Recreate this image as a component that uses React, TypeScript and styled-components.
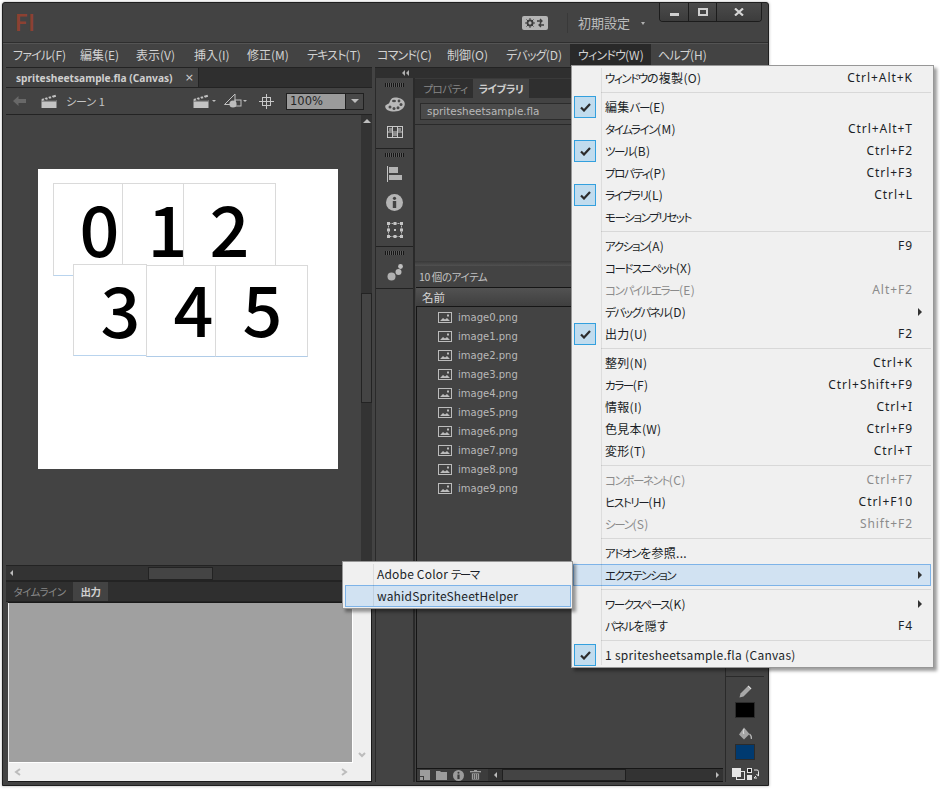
import React from "react";
import styled, { createGlobalStyle } from "styled-components";

const UI = `"Noto Sans CJK JP", "Noto Sans", sans-serif`;
const LATIN = `"DejaVu Sans", "Noto Sans", sans-serif`;

const Global = createGlobalStyle`
  html, body { margin: 0; padding: 0; background: #fff; }
  * { box-sizing: border-box; }
  body { font-family: ${UI}; font-feature-settings: "palt"; }
`;

const Page = styled.div`
  position: relative;
  width: 940px;
  height: 791px;
  padding: 2px 0 0 2px;
  overflow: hidden;
  background: #fff;
`;
const Win = styled.div`
  width: 767px;
  height: 784px;
  display: flex;
  flex-direction: column;
  background: #434343;
  border: 1px solid #1f1f1f;
  border-radius: 3px 3px 0 0;
  box-shadow: 0 0 3px rgba(0, 0, 0, 0.35);
`;

/* Title bar */
const TitleBar = styled.div`
  height: 40px;
  flex: none;
  display: flex;
  align-items: center;
  padding-left: 12px;
  border-bottom: 1px solid #2e2e2e;
`;
const Logo = styled.span`
  font: 700 22px "Lato", sans-serif;
  letter-spacing: 1.5px;
  color: #8c4131;
  margin-right: auto;
`;
const Badge = styled.span`
  width: 26px;
  height: 14px;
  border-radius: 2px;
  background: #b4b4b4;
  display: flex;
  align-items: center;
  justify-content: center;
`;
const TitleSep = styled.span`
  width: 1px;
  height: 20px;
  background: #393939;
  margin: 0 10px 0 19px;
`;
const Workspace = styled.span`
  font-size: 13px;
  color: #bdbdbd;
  width: 63px;
  white-space: nowrap;
`;
const Caret = styled.span`
  width: 0;
  height: 0;
  border-left: 2.5px solid transparent;
  border-right: 2.5px solid transparent;
  border-top: 3px solid #b0b0b0;
  margin-right: 14px;
  margin-top: 2px;
`;
const Controls = styled.div`
  align-self: flex-start;
  display: flex;
  height: 19px;
  margin-right: 6px;
  border: 1px solid #1c1c1c;
  border-top: none;
  border-radius: 0 0 4px 4px;
  overflow: hidden;
`;
const Ctl = styled.span<{ $w: number }>`
  width: ${(p) => p.$w}px;
  display: flex;
  align-items: center;
  justify-content: center;
  background: linear-gradient(#4b4b4b, #3c3c3c);
  & + & {
    border-left: 1px solid #1c1c1c;
  }
`;

/* Menu bar */
const MenuBar = styled.div`
  height: 24px;
  flex: none;
  display: flex;
  padding-left: 3px;
  border-top: 1px solid #545454;
`;
const MenuItem = styled.span<{ $w: number; $on?: boolean }>`
  width: ${(p) => p.$w}px;
  flex: none;
  padding-left: ${(p) => (p.$on ? 8 : 7)}px;
  font-size: 12px;
  line-height: 21px;
  height: 22px;
  color: #d2d2d2;
  white-space: nowrap;
  background: ${(p) => (p.$on ? "#292929" : "transparent")};
`;
const KanaRun = styled.span<{ $bar?: boolean }>`
  font-size: ${(p) => (p.$bar ? 12 : 11.5)}px;
  letter-spacing: ${(p) => (p.$bar ? -0.8 : -1.4)}px;
`;

/* Workspace */
const Body = styled.div`
  flex: 1;
  min-height: 0;
  display: flex;
  padding: 0 3px 3px;
`;
const LeftCol = styled.div`
  width: 366px;
  flex: none;
  display: flex;
  flex-direction: column;
  margin-right: 3px;
`;
const TabBar = styled.div<{ $h: number }>`
  height: ${(p) => p.$h}px;
  flex: none;
  display: flex;
  background: #2f2f2f;
  border-top: 1px solid #232323;
  border-bottom: 1px solid #232323;
`;
const DocTab = styled.div`
  width: 193px;
  display: flex;
  align-items: center;
  justify-content: space-between;
  padding: 0 4px 0 10px;
  background: #434343;
  border-right: 1px solid #232323;
  font: 700 10.2px "Noto Sans", sans-serif;
  color: #cfcfcf;
  white-space: nowrap;
`;
const Close = styled.span`
  font: 400 11px "DejaVu Sans", sans-serif;
  color: #cfcfcf;
`;
const PanelTab = styled.span<{ $on?: boolean; $w: number }>`
  width: ${(p) => p.$w}px;
  display: flex;
  align-items: center;
  justify-content: center;
  font-size: 10.5px;
  letter-spacing: -0.5px;
  font-weight: ${(p) => (p.$on ? 700 : 400)};
  color: ${(p) => (p.$on ? "#cfcfcf" : "#878787")};
  background: ${(p) => (p.$on ? "#434343" : "transparent")};
  white-space: nowrap;
`;
const EditBar = styled.div`
  height: 27px;
  flex: none;
  display: flex;
  align-items: center;
  padding: 0 8px 0 7px;
  border-bottom: 1px solid #232323;
`;
const SceneLabel = styled.span`
  font-size: 11px;
  color: #c4c4c4;
  margin-left: 9px;
  margin-right: auto;
`;
const ToolGlyph = styled.span<{ $ml?: number }>`
  display: flex;
  margin-left: ${(p) => p.$ml ?? 0}px;
`;
const Combo = styled.div`
  width: 78px;
  height: 17px;
  display: flex;
  margin-left: 12px;
  border: 1px solid #202020;
`;
const ComboField = styled.span`
  flex: 1;
  background: #9b9b9b;
  font: 400 11.5px/15px ${LATIN};
  color: #262626;
  padding-left: 3px;
`;
const ComboButton = styled.span`
  width: 18px;
  display: flex;
  align-items: center;
  justify-content: center;
  background: #484848;
  border-left: 1px solid #202020;
`;
const Tri = styled.span<{ $dir: "up" | "down" | "left" | "right"; $c?: string; $s?: number }>`
  width: 0;
  height: 0;
  flex: none;
  ${(p) => {
    const s = p.$s ?? 4;
    const c = p.$c ?? "#bdbdbd";
    if (p.$dir === "up") return `border-left:${s}px solid transparent;border-right:${s}px solid transparent;border-bottom:${s}px solid ${c};`;
    if (p.$dir === "down") return `border-left:${s}px solid transparent;border-right:${s}px solid transparent;border-top:${s}px solid ${c};`;
    if (p.$dir === "left") return `border-top:${s}px solid transparent;border-bottom:${s}px solid transparent;border-right:${s}px solid ${c};`;
    return `border-top:${s}px solid transparent;border-bottom:${s}px solid transparent;border-left:${s}px solid ${c};`;
  }}
`;
const StageRow = styled.div`
  height: 451px;
  flex: none;
  display: flex;
`;
const Stage = styled.div`
  flex: 1;
  padding: 54px 0 0 32px;
  border-bottom: 1px solid #232323;
`;
const Canvas = styled.div`
  position: relative;
  width: 300px;
  height: 300px;
  background: #fff;
`;
const Sprite = styled.div<{ $x: number; $y: number; $w: number; $h: number; $line?: string }>`
  position: absolute;
  left: ${(p) => p.$x}px;
  top: ${(p) => p.$y}px;
  width: ${(p) => p.$w}px;
  height: ${(p) => p.$h}px;
  display: flex;
  align-items: center;
  justify-content: center;
  background: #fff;
  border: 1px solid #dadada;
  border-bottom-color: ${(p) => p.$line ?? "#dadada"};
`;
const Digit = styled.span<{ $dx: number; $dy: number }>`
  font: 500 70px/1 "Noto Sans CJK JP", sans-serif;
  color: #000;
  transform: translate(${(p) => p.$dx}px, ${(p) => p.$dy}px);
`;
const VScroll = styled.div`
  width: 11px;
  flex: none;
  display: flex;
  flex-direction: column;
  align-items: center;
  padding-top: 4px;
  background: #333;
  border-bottom: 1px solid #232323;
`;
const VThumb = styled.div`
  width: 11px;
  height: 110px;
  margin-top: 170px;
  background: #444;
  border: 1px solid #232323;
`;
const HScroll = styled.div`
  height: 15px;
  flex: none;
  display: flex;
  align-items: center;
  padding-left: 4px;
  background: #333;
  border-bottom: 1px solid #232323;
`;
const HThumb = styled.div`
  width: 65px;
  height: 13px;
  margin-left: 135px;
  background: #444;
  border: 1px solid #232323;
`;
const Output = styled.div`
  flex: 1;
  display: grid;
  grid-template-columns: 1fr 18px;
  grid-template-rows: 1fr 18px;
  margin-left: 2px;
  padding-left: 1px;
  background: #efefef;
  border-top: 1px solid #1a1a1a;
  border-right: 1px solid #1a1a1a;
  border-bottom: 1px solid #1a1a1a;
`;
const OutputPane = styled.div`
  background: #a0a0a0;
  border-right: 1px solid #fff;
  border-bottom: 1px solid #fff;
`;
const ChevCell = styled.div<{ $j: string; $a: string }>`
  display: flex;
  justify-content: ${(p) => p.$j};
  align-items: ${(p) => p.$a};
  padding: 4px 5px;
`;

/* Dock */
const DockArea = styled.div`
  flex: 1;
  display: flex;
  flex-direction: column;
`;
const CollapseStrip = styled.div`
  height: 11px;
  flex: none;
  display: flex;
  align-items: center;
  padding-left: 27px;
  background: #2f2f2f;
  border-top: 1px solid #232323;
  gap: 1px;
`;
const DockRow = styled.div`
  flex: 1;
  min-height: 0;
  display: flex;
`;
const IconCol = styled.div`
  width: 40px;
  flex: none;
  display: flex;
  flex-direction: column;
  padding-top: 2px;
  gap: 1px;
  border-left: 1px solid #2a2a2a;
  border-right: 2px solid #2a2a2a;
`;
const IconGroup = styled.div`
  display: flex;
  flex-direction: column;
  align-items: center;
  padding: 3px 0 2px;
  border-bottom: 1px solid #222;
`;
const Grip = styled.div`
  width: 19px;
  height: 4px;
  margin-bottom: 3px;
  background: repeating-linear-gradient(90deg, #161616 0 1px, #5a5a5a 1px 2px);
`;
const IconCell = styled.div<{ $h?: number }>`
  height: ${(p) => p.$h ?? 28}px;
  display: flex;
  align-items: center;
  justify-content: center;
`;
const Library = styled.div`
  width: 308px;
  flex: none;
  display: flex;
  flex-direction: column;
`;
const LibTabs = styled.div`
  height: 20px;
  flex: none;
  display: flex;
  padding-left: 3px;
  background: #2f2f2f;
  border-top: 1px solid #3a3a3a;
`;
const LibPicker = styled.div`
  height: 27px;
  flex: none;
  padding: 5px 0 0 5px;
  border-bottom: 1px solid #2a2a2a;
`;
const Picker = styled.div`
  height: 17px;
  background: #4a4a4a;
  border: 1px solid #2c2c2c;
  font: 400 10.4px/15px ${LATIN};
  color: #b9b9b9;
  padding-left: 6px;
`;
const Preview = styled.div`
  height: 136px;
  flex: none;
`;
const Sash = styled.div`
  height: 5px;
  flex: none;
  background: linear-gradient(#393939, #515151);
`;
const Count = styled.div`
  height: 21px;
  flex: none;
  display: flex;
  align-items: center;
  padding-left: 4px;
  font-size: 10.5px;
  letter-spacing: -0.4px;
  color: #c2c2c2;
`;
const ListHeader = styled.div`
  height: 20px;
  flex: none;
  display: flex;
  align-items: center;
  padding-left: 6px;
  margin-left: 1px;
  background: linear-gradient(#525252, #3f3f3f);
  border-top: 1px solid #161616;
  border-bottom: 1px solid #161616;
  font-size: 11.5px;
  color: #d6d6d6;
`;
const List = styled.div`
  flex: 1;
  margin-left: 1px;
  padding-top: 1px;
  border-left: 1px solid #161616;
`;
const ListRow = styled.div`
  height: 19px;
  display: flex;
  align-items: center;
  gap: 6px;
  padding-left: 21px;
  font: 400 10px "DejaVu Sans", sans-serif;
  color: #b8b8b8;
`;
const LibFoot = styled.div`
  height: 14px;
  flex: none;
  display: flex;
  align-items: center;
  margin-left: 1px;
  padding-left: 3px;
  gap: 6px;
  background: #3c3c3c;
  border-top: 1px solid #161616;
  border-bottom: 1px solid #161616;
  border-left: 1px solid #161616;
`;
const FootScroll = styled.div`
  flex: 1;
  height: 100%;
  display: flex;
  align-items: center;
  margin-left: 1px;
  padding: 0 4px 0 6px;
  background: #333;
`;
const FootThumb = styled.div`
  width: 124px;
  height: 100%;
  margin: 0 auto 0 5px;
  background: #444;
  border: 1px solid #1f1f1f;
`;
const Tools = styled.div`
  width: 39px;
  flex: none;
  display: flex;
  flex-direction: column;
  align-items: center;
  margin-left: 2px;
  border-left: 1px solid #2a2a2a;
`;
const ToolsSpacer = styled.div`
  flex: 1;
  align-self: stretch;
  border-bottom: 1px solid #2a2a2a;
  margin-bottom: 5px;
`;
const Swatch = styled.div<{ $c: string }>`
  width: 20px;
  height: 16px;
  background: ${(p) => p.$c};
  border: 1px solid #2c2c2c;
  margin-top: 2px;
  margin-bottom: 6px;
`;
const SwapRow = styled.div`
  display: flex;
  gap: 2px;
  margin: 2px 0 2px;
`;

/* Menus */
const Popup = styled.div<{ $x: number; $y: number; $w: number; $gut: number }>`
  position: absolute;
  left: ${(p) => p.$x}px;
  top: ${(p) => p.$y}px;
  width: ${(p) => p.$w}px;
  padding: 1px 0;
  background: #f0f0f0;
  border: 1px solid #979797;
  box-shadow: 3px 3px 3px rgba(0, 0, 0, 0.38);
  &::before {
    content: "";
    position: absolute;
    left: ${(p) => p.$gut}px;
    top: 2px;
    bottom: 2px;
    width: 1px;
    background: rgba(0, 0, 0, 0.08);
    z-index: 1;
  }
`;
const Row = styled.div<{ $hot?: boolean; $off?: boolean }>`
  height: 22px;
  display: flex;
  align-items: center;
  margin: 0 2px 0 1px;
  border: 1px solid ${(p) => (p.$hot ? "#7db3e8" : "transparent")};
  background: ${(p) => (p.$hot ? "#d1e2f2" : "transparent")};
  font-size: 12px;
  letter-spacing: 0.3px;
  color: ${(p) => (p.$off ? "#8b8b8b" : "#1b1f27")};
  white-space: nowrap;
`;
const Gutter = styled.span`
  width: 22px;
  flex: none;
  display: flex;
  justify-content: center;
`;
const Check = styled.span`
  width: 22px;
  height: 22px;
  flex: none;
  display: flex;
  align-items: center;
  justify-content: center;
  background: #c1dcee;
  border: 1px solid #33a0de;
`;
const RowLabel = styled.span`
  margin-left: 9px;
  margin-bottom: 2px;
`;
const Shortcut = styled.span`
  margin-left: auto;
  margin-right: 17px;
  margin-bottom: 2px;
  font-family: "Noto Sans", sans-serif;
  letter-spacing: 0.95px;
`;
const RowArrow = styled.span`
  margin-left: auto;
  margin-right: 8px;
  display: flex;
`;
const Sep = styled.div`
  height: 7px;
  display: flex;
  align-items: center;
  margin: 0 2px 0 29px;
  &::after {
    content: "";
    flex: 1;
    height: 1px;
    background: #d8d8d8;
  }
`;
const SubRow = styled(Row)`
  margin: 0 1px 0 2px;
  letter-spacing: 0.18px;
`;
const SubLabel = styled.span`
  margin-left: 31px;
  margin-bottom: 2px;
`;

/* Icons */
const C = "#b8b8b8";
const Palette = () => (
  <svg width="20" height="15" viewBox="0 0 20 15">
    <path d="M10 0.5C15.5 0.5 19.8 3 19.8 7c0 4-4.5 7.5-10.5 7.5C4 14.5.2 12.5.2 9.5c0-2 2.3-2 3.6-3C5 5.5 5 .5 10 .5z" fill={C} />
    <g fill="#4a4a4a">
      <circle cx="5" cy="10" r="1.5" />
      <circle cx="9" cy="11.6" r="1.5" />
      <circle cx="13" cy="10.8" r="1.5" />
      <circle cx="16" cy="7.6" r="1.5" />
      <circle cx="14" cy="4" r="1.4" />
      <ellipse cx="9" cy="4" rx="2" ry="1.3" />
    </g>
  </svg>
);
const GridIcon = () => (
  <svg width="16" height="12" viewBox="0 0 16 12">
    <rect x=".5" y=".5" width="15" height="11" fill="#444" stroke="#c8c8c8" />
    <path d="M5.5 0v12M10.5 0v12M0 6h16" stroke="#c8c8c8" />
    <rect x="2" y="2" width="3" height="3" fill="#8d8d8d" />
    <rect x="11" y="2" width="3" height="3" fill="#8d8d8d" />
    <rect x="6" y="7" width="4" height="3" fill="#8d8d8d" />
  </svg>
);
const AlignIcon = () => (
  <svg width="15" height="16" viewBox="0 0 15 16">
    <rect x="0" y="0" width="1" height="16" fill="#c4c4c4" />
    <rect x="2" y="1" width="9" height="6" fill="#b4b4b4" />
    <rect x="2" y="9" width="13" height="5" fill="#b4b4b4" />
  </svg>
);
const InfoIcon = ({ size = 17, bg = "#b4b4b4", fg = "#434343" }: { size?: number; bg?: string; fg?: string }) => (
  <svg width={size} height={size} viewBox="0 0 17 17">
    <circle cx="8.5" cy="8.5" r="8.5" fill={bg} />
    <circle cx="8.5" cy="4.3" r="1.6" fill={fg} />
    <rect x="6.8" y="7" width="3.4" height="7" fill={fg} />
  </svg>
);
const TransformIcon = () => (
  <svg width="16" height="16" viewBox="0 0 16 16">
    <rect x="1.5" y="1.5" width="13" height="13" fill="none" stroke="#b8b8b8" strokeDasharray="2 1" />
    <g fill="#c4c4c4">
      <rect x="0" y="0" width="3" height="3" />
      <rect x="13" y="0" width="3" height="3" />
      <rect x="0" y="13" width="3" height="3" />
      <rect x="13" y="13" width="3" height="3" />
      <rect x="6.5" y="0" width="3" height="3" />
      <rect x="6.5" y="13" width="3" height="3" />
      <rect x="0" y="6.5" width="3" height="3" />
      <rect x="13" y="6.5" width="3" height="3" />
      <rect x="7" y="7" width="2" height="2" />
    </g>
  </svg>
);
const DotsIcon = () => (
  <svg width="16" height="17" viewBox="0 0 16 17">
    <circle cx="4.5" cy="12.5" r="4" fill="#b0b0b0" />
    <circle cx="11.5" cy="8" r="3" fill="#b8b8b8" />
    <circle cx="13.5" cy="2.5" r="2.4" fill="#c0c0c0" />
  </svg>
);
const Clapper = () => (
  <svg width="16" height="14" viewBox="0 0 16 14">
    <rect x="0.5" y="6" width="15" height="8" fill="#c4c4c4" />
    <rect x="0.5" y="6" width="15" height="1.5" fill="#5c5c5c" />
    <path d="M0.5 5L14.5 0.8l.6 2L1 7z" fill="#c4c4c4" />
    <path d="M3 4.3l1.5 2M6.5 3.2L8 5.3M10 2.2l1.5 2" stroke="#434343" strokeWidth="1.4" />
  </svg>
);
const BackArrow = () => (
  <svg width="13" height="10" viewBox="0 0 13 10">
    <path d="M0 5L5.5 0v3H13v4H5.5v3z" fill="#686868" />
  </svg>
);
const ShapeTool = () => (
  <svg width="18" height="16" viewBox="0 0 18 16">
    <path d="M.5 11.5L11 1v10.5z" fill="none" stroke="#c0c0c0" />
    <rect x="11" y="7" width="6" height="6" fill="none" stroke="#c0c0c0" />
    <circle cx="9" cy="11" r="3.6" fill="#bcbcbc" />
  </svg>
);
const CrossHair = () => (
  <svg width="15" height="15" viewBox="0 0 15 15">
    <rect x="3.5" y="3.5" width="8" height="8" fill="none" stroke="#c8c8c8" />
    <path d="M7.5 0v15M0 7.5h15" stroke="#c8c8c8" />
  </svg>
);
const ImageIcon = () => (
  <svg width="14" height="11" viewBox="0 0 14 11">
    <rect x=".5" y=".5" width="13" height="10" fill="#434343" stroke="#bcbcbc" />
    <path d="M2 9l3-3 2 1.5L9 6l3 3z" fill="#bcbcbc" />
    <rect x="9" y="2.5" width="2" height="2" fill="#bcbcbc" />
  </svg>
);
const CheckMark = () => (
  <svg width="11" height="9" viewBox="0 0 11 9">
    <path d="M1 4.5l3 3 6-6.5" fill="none" stroke="#2c2c2c" strokeWidth="2.2" />
  </svg>
);
const Gears = () => (
  <svg width="20" height="10" viewBox="0 0 20 10">
    <circle cx="5" cy="5" r="2.6" fill="none" stroke="#3c3c3c" strokeWidth="1.8" />
    <path d="M5 0v10M0 5h10M1.5 1.5l7 7M8.5 1.5l-7 7" stroke="#3c3c3c" strokeWidth="1" />
    <circle cx="5" cy="5" r="1.4" fill="#b4b4b4" />
    <path d="M12 3h5M15 1l2 2-2 2M19 7h-5M16 5l-2 2 2 2" fill="none" stroke="#3c3c3c" strokeWidth="1.3" />
  </svg>
);
const MinIcon = () => (
  <svg width="9" height="10" viewBox="0 0 9 10">
    <rect x="0" y="6" width="9" height="3" fill="#cfcfcf" />
  </svg>
);
const MaxIcon = () => (
  <svg width="10" height="8" viewBox="0 0 10 8">
    <rect x="1" y="1" width="8" height="6" fill="none" stroke="#cfcfcf" strokeWidth="2" />
  </svg>
);
const XIcon = () => (
  <svg width="10" height="8" viewBox="0 0 10 8">
    <path d="M1 0.5l8 7M9 0.5l-8 7" stroke="#d4d4d4" strokeWidth="2.2" />
  </svg>
);
const Chevron = ({ d }: { d: string }) => (
  <svg width="8" height="8" viewBox="0 0 8 8">
    <path d={d} fill="none" stroke="#bcbcbc" strokeWidth="2" />
  </svg>
);
const NewSym = () => (
  <svg width="10" height="10" viewBox="0 0 10 10">
    <path d="M0 0h10v10H4V6H0z" fill="#9c9c9c" />
    <path d="M0 7h3v3H0z" fill="#9c9c9c" />
  </svg>
);
const Folder = () => (
  <svg width="11" height="9" viewBox="0 0 11 9">
    <path d="M0 0h4l1 1h6v8H0z" fill="#9c9c9c" />
  </svg>
);
const Trash = () => (
  <svg width="11" height="10" viewBox="0 0 11 10">
    <rect x="0" y="1" width="11" height="1.4" fill="#9c9c9c" />
    <rect x="4" y="0" width="3" height="1" fill="#9c9c9c" />
    <path d="M1.5 3h8v7h-8zM3.5 4v5M5.5 4v5M7.5 4v5" fill="#9c9c9c" stroke="#3c3c3c" strokeWidth=".7" />
  </svg>
);
const Pencil = () => (
  <svg width="13" height="13" viewBox="0 0 13 13">
    <path d="M0.5 12.5l1-4L8.5 1.5l3 3-7 7z" fill="#a8a8a8" />
    <path d="M8.5 1.5l1-1 3 3-1 1z" fill="#e0e0e0" />
  </svg>
);
const Bucket = () => (
  <svg width="13" height="13" viewBox="0 0 13 13">
    <path d="M5 0.5L10.5 7 5 12.5 0 7.5z" fill="#a4a4a4" />
    <path d="M5 2C4 4 4 6 5 7" stroke="#e2e2e2" fill="none" />
    <path d="M10.5 7c1.5 1 2 3 2 5" stroke="#b4b4b4" strokeWidth="1.4" fill="none" />
  </svg>
);
const Overlap = () => (
  <svg width="13" height="12" viewBox="0 0 13 12">
    <rect x=".5" y=".5" width="8" height="8" fill="#e6e6e6" stroke="#e6e6e6" />
    <rect x="4.5" y="3.5" width="8" height="8" fill="none" stroke="#e6e6e6" />
  </svg>
);
const Swap = () => (
  <svg width="12" height="12" viewBox="0 0 12 12">
    <rect x=".5" y=".5" width="4" height="4" fill="#222" stroke="#e6e6e6" />
    <rect x="0" y="7" width="5" height="5" fill="#e6e6e6" />
    <path d="M7 2h3a1.5 1.5 0 011.5 1.5V8M9.5 6l2 2.2M7 10l2-2M7 10h3" fill="none" stroke="#e6e6e6" />
  </svg>
);

const Txt = ({ t, bar }: { t: string; bar?: boolean }) => (
  <>
    {t.split(/([\u30A0-\u30FF]+)/).map((part, i) =>
      i % 2 ? (
        <KanaRun key={i} $bar={bar}>{part}</KanaRun>
      ) : (
        <React.Fragment key={i}>{part}</React.Fragment>
      )
    )}
  </>
);

type Item =
  | { sep: true }
  | { sep?: false; label: string; key?: string; checked?: boolean; off?: boolean; hot?: boolean; more?: boolean };

const menuTop = [
  ["ファイル(F)", 67], ["編集(E)", 56], ["表示(V)", 58], ["挿入(I)", 53], ["修正(M)", 60],
  ["テキスト(T)", 70], ["コマンド(C)", 70], ["制御(O)", 59], ["デバッグ(D)", 71],
] as const;

const menu: Item[] = [
  { label: "ウィンドウの複製(O)", key: "Ctrl+Alt+K" },
  { sep: true },
  { label: "編集バー(E)", checked: true },
  { label: "タイムライン(M)", key: "Ctrl+Alt+T" },
  { label: "ツール(B)", key: "Ctrl+F2", checked: true },
  { label: "プロパティ(P)", key: "Ctrl+F3" },
  { label: "ライブラリ(L)", key: "Ctrl+L", checked: true },
  { label: "モーションプリセット" },
  { sep: true },
  { label: "アクション(A)", key: "F9" },
  { label: "コードスニペット(X)" },
  { label: "コンパイルエラー(E)", key: "Alt+F2", off: true },
  { label: "デバッグパネル(D)", more: true },
  { label: "出力(U)", key: "F2", checked: true },
  { sep: true },
  { label: "整列(N)", key: "Ctrl+K" },
  { label: "カラー(F)", key: "Ctrl+Shift+F9" },
  { label: "情報(I)", key: "Ctrl+I" },
  { label: "色見本(W)", key: "Ctrl+F9" },
  { label: "変形(T)", key: "Ctrl+T" },
  { sep: true },
  { label: "コンポーネント(C)", key: "Ctrl+F7", off: true },
  { label: "ヒストリー(H)", key: "Ctrl+F10" },
  { label: "シーン(S)", key: "Shift+F2", off: true },
  { sep: true },
  { label: "アドオンを参照..." },
  { label: "エクステンション", hot: true, more: true },
  { sep: true },
  { label: "ワークスペース(K)", more: true },
  { label: "パネルを隠す", key: "F4" },
  { sep: true },
  { label: "1 spritesheetsample.fla (Canvas)", checked: true },
];

const sprites = [
  { d: "0", x: 15, y: 14, w: 70, h: 93, dx: 11.5, dy: -3.5, line: "#b9d4ee" },
  { d: "1", x: 84, y: 14, w: 62, h: 93, dx: 14.5, dy: -3.5 },
  { d: "2", x: 145, y: 14, w: 93, h: 93, dx: 0, dy: -3.5 },
  { d: "3", x: 35, y: 95, w: 74, h: 92, dx: 10.5, dy: -2.5, line: "#b9d4ee" },
  { d: "4", x: 108, y: 96, w: 70, h: 92, dx: 12.5, dy: -4, line: "#b0cce8" },
  { d: "5", x: 177, y: 96, w: 93, h: 92, dx: 1, dy: -4, line: "#b0cce8" },
];

export default function App() {
  return (
    <Page>
      <Global />
      <Win>
        <TitleBar>
          <Logo>Fl</Logo>
          <Badge><Gears /></Badge>
          <TitleSep />
          <Workspace>初期設定</Workspace>
          <Caret />
          <Controls>
            <Ctl $w={28}><MinIcon /></Ctl>
            <Ctl $w={28}><MaxIcon /></Ctl>
            <Ctl $w={45}><XIcon /></Ctl>
          </Controls>
        </TitleBar>
        <MenuBar>
          {menuTop.map(([t, w]) => (
            <MenuItem key={t} $w={w}><Txt t={t} bar /></MenuItem>
          ))}
          <MenuItem $w={81} $on><Txt t="ウィンドウ(W)" bar /></MenuItem>
          <MenuItem $w={70}><Txt t="ヘルプ(H)" bar /></MenuItem>
        </MenuBar>
        <Body>
          <LeftCol>
            <TabBar $h={21}>
              <DocTab>
                spritesheetsample.fla (Canvas)
                <Close>×</Close>
              </DocTab>
            </TabBar>
            <EditBar>
              <BackArrow />
              <ToolGlyph $ml={15}><Clapper /></ToolGlyph>
              <SceneLabel>シーン 1</SceneLabel>
              <ToolGlyph><Clapper /></ToolGlyph>
              <ToolGlyph $ml={3}><Tri $dir="down" $s={2.5} /></ToolGlyph>
              <ToolGlyph $ml={8}><ShapeTool /></ToolGlyph>
              <ToolGlyph $ml={1}><Tri $dir="down" $s={2.5} /></ToolGlyph>
              <ToolGlyph $ml={12}><CrossHair /></ToolGlyph>
              <Combo>
                <ComboField>100%</ComboField>
                <ComboButton><Tri $dir="down" $s={4} /></ComboButton>
              </Combo>
            </EditBar>
            <StageRow>
              <Stage>
                <Canvas>
                  {sprites.map((s) => (
                    <Sprite key={s.d} $x={s.x} $y={s.y} $w={s.w} $h={s.h} $line={s.line}>
                      <Digit $dx={s.dx} $dy={s.dy}>{s.d}</Digit>
                    </Sprite>
                  ))}
                </Canvas>
              </Stage>
              <VScroll>
                <Tri $dir="up" $s={4} />
                <VThumb />
              </VScroll>
            </StageRow>
            <HScroll>
              <Tri $dir="left" $s={3.5} />
              <HThumb />
            </HScroll>
            <TabBar $h={21}>
              <PanelTab $w={67}>タイムライン</PanelTab>
              <PanelTab $w={35} $on>出力</PanelTab>
            </TabBar>
            <Output>
              <OutputPane />
              <ChevCell $j="center" $a="flex-end"><Chevron d="M1 2l3 3 3-3" /></ChevCell>
              <ChevCell $j="space-between" $a="center">
                <Chevron d="M6 1L2 4l4 3" />
                <Chevron d="M2 1l4 3-4 3" />
              </ChevCell>
              <div />
            </Output>
          </LeftCol>
          <DockArea>
            <CollapseStrip>
              <Tri $dir="left" $s={3} $c="#b0b0b0" />
              <Tri $dir="left" $s={3} $c="#b0b0b0" />
            </CollapseStrip>
            <DockRow>
              <IconCol>
                <IconGroup>
                  <Grip />
                  <IconCell><Palette /></IconCell>
                  <IconCell><GridIcon /></IconCell>
                </IconGroup>
                <IconGroup>
                  <Grip />
                  <IconCell><AlignIcon /></IconCell>
                  <IconCell><InfoIcon /></IconCell>
                  <IconCell><TransformIcon /></IconCell>
                </IconGroup>
                <IconGroup>
                  <Grip />
                  <IconCell><DotsIcon /></IconCell>
                </IconGroup>
              </IconCol>
              <Library>
                <LibTabs>
                  <PanelTab $w={55}>プロパティ</PanelTab>
                  <PanelTab $w={56} $on>ライブラリ</PanelTab>
                </LibTabs>
                <LibPicker><Picker>spritesheetsample.fla</Picker></LibPicker>
                <Preview />
                <Sash />
                <Count>10 個のアイテム</Count>
                <ListHeader>名前</ListHeader>
                <List>
                  {Array.from({ length: 10 }, (_, i) => (
                    <ListRow key={i}>
                      <ImageIcon />
                      image{i}.png
                    </ListRow>
                  ))}
                </List>
                <LibFoot>
                  <NewSym />
                  <Folder />
                  <InfoIcon size={11} bg="#9c9c9c" fg="#3c3c3c" />
                  <Trash />
                  <FootScroll>
                    <Tri $dir="left" $s={3.5} />
                    <FootThumb />
                    <Tri $dir="right" $s={3.5} />
                  </FootScroll>
                </LibFoot>
              </Library>
              <Tools>
                <ToolsSpacer />
                <IconCell $h={18}><Pencil /></IconCell>
                <Swatch $c="#000" />
                <IconCell $h={18}><Bucket /></IconCell>
                <Swatch $c="#003a70" />
                <SwapRow>
                  <Overlap />
                  <Swap />
                </SwapRow>
              </Tools>
            </DockRow>
          </DockArea>
        </Body>
      </Win>

      <Popup $x={571} $y={65} $w={363} $gut={29}>
        {menu.map((m, i) =>
          m.sep ? (
            <Sep key={i} />
          ) : (
            <Row key={i} $hot={m.hot} $off={m.off}>
              <Gutter>{m.checked && <Check><CheckMark /></Check>}</Gutter>
              <RowLabel><Txt t={m.label} /></RowLabel>
              {m.key && <Shortcut>{m.key}</Shortcut>}
              {m.more && <RowArrow><Tri $dir="right" $s={4} $c="#333" /></RowArrow>}
            </Row>
          )
        )}
      </Popup>
      <Popup $x={342} $y={561} $w={231} $gut={30}>
        <SubRow><SubLabel><Txt t="Adobe Color テーマ" /></SubLabel></SubRow>
        <SubRow $hot><SubLabel>wahidSpriteSheetHelper</SubLabel></SubRow>
      </Popup>
    </Page>
  );
}
